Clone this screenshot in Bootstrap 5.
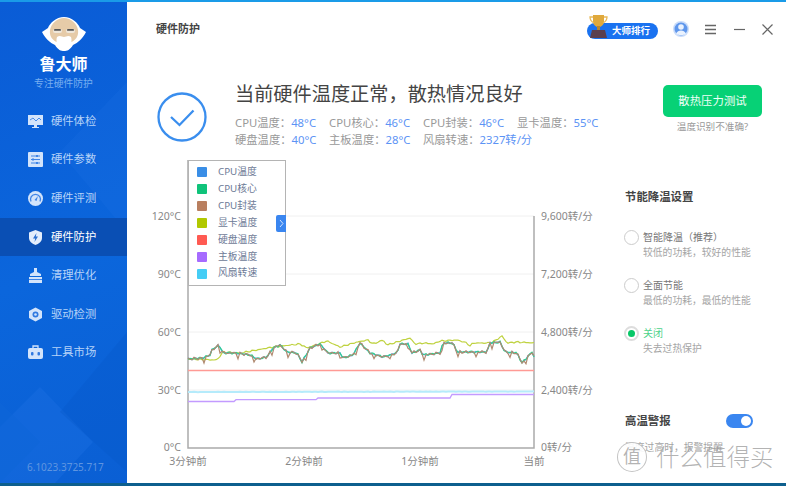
<!DOCTYPE html>
<html lang="zh-CN">
<head>
  <meta charset="UTF-8">
  <title>鲁大师 硬件防护</title>
  <link rel="stylesheet" href="https://cdn.jsdelivr.net/npm/bootstrap@5.3.0/dist/css/bootstrap.min.css">
  <style>
    html, body { height: 486px; overflow: hidden; }
    body { font-family: "Noto Sans", "Noto Sans CJK SC", sans-serif; background: #fff; color: #444; }
    .shell { width: 786px; height: 486px; border-top: 2px solid #1a9be8; border-bottom: 3px solid #0d5f8e; position: relative; overflow: hidden; }
    .side { width: 127px; flex: none; background: linear-gradient(160deg, #0a5cd6 0%, #0b66dc 55%, #0a5fd4 100%); position: relative; }
    .side-decor { position: absolute; left: 0; top: 0; }
    .side-body { position: relative; height: 100%; }
    .brand { padding-top: 15px; height: 100px; }
    .brand-name { font-size: 16px; font-weight: 700; color: #fff; line-height: 20px; margin-top: 3px; }
    .brand-sub { font-size: 9.8px; color: #78aef0; line-height: 14px; margin-top: 3px; }
    .side-item { height: 38.6px; padding-left: 28px; gap: 8px; font-size: 11.3px; color: #b6d3f8; }
    .side-item.on { background: #0a4fb4; color: #fff; }
    .side-ver { margin-top: auto; padding: 0 0 9px 27px; font-size: 10px; line-height: 14px; color: #5f95e0; }
    .topbar { height: 54px; padding: 0 13px 0 29px; }
    .page-name { font-size: 11px; font-weight: 700; color: #444; }
    .rank-pill { width: 71px; height: 16px; background: #1a72f0; border-radius: 8px; color: #fff; font-size: 9.5px; font-weight: 700; padding-left: 25px; line-height: 16px; position: relative; margin-top: 3px; }
    .rank-cup { position: absolute; left: 2px; top: -9px; }
    .icon-user { margin-left: 15px; }
    .icon-menu { margin-left: 15px; }
    .icon-min { margin-left: 17px; }
    .icon-close { margin-left: 17px; }
    .hero { height: 99px; padding-left: 30px; }
    .hero-check { margin-top: 35px; flex: none; }
    .hero-text { margin-left: 28px; padding-top: 25px; width: 394px; }
    .hero-title { font-size: 19.2px; line-height: 26px; color: #444; white-space: nowrap; }
    .stat-row { font-size: 11.3px; line-height: 17px; color: #999; }
    .stat-row > span { width: 94px; white-space: nowrap; }
    .stat-val { color: #5c93f5; font-weight: 400; }
    .stats { margin-top: 7px; }
    .btn-stress { width: 99px; height: 32px; background: #07d176; color: #f0fff7; border: 0; border-radius: 5px; font-size: 11.4px; padding: 0; }
    .btn-stress:hover { background: #07d176; color: #f0fff7; }
    .hero-side { margin-left: 34px; padding-top: 29px; width: 99px; }
    .hint { font-size: 9.6px; line-height: 14px; margin-top: 3px; color: #999; white-space: nowrap; }
    .chart-box { width: 470px; height: 315px; margin-left: 13px; flex: none; position: relative; }
    .chart-box svg text { font-size: 10.5px; fill: #888; font-family: "Noto Sans", "Noto Sans CJK SC", sans-serif; }
    .legend-box { position: absolute; left: 48px; top: 5px; width: 98px; height: 126px; background: #fff; border: 1px solid #b4b4b4; padding-top: 3px; }
    .legend-row { height: 16.9px; padding-left: 8px; font-size: 9.8px; color: #6d7a96; }
    .legend-chip { width: 10px; height: 10px; border-radius: 1px; margin-right: 11px; flex: none; }
    .legend-tab { position: absolute; right: -1px; top: 54px; width: 10px; height: 17px; background: #3a86f0; border-radius: 2px 0 0 2px; }
    .panel { padding-left: 15px; padding-top: 35px; width: 176px; }
    .panel-title { font-size: 11.4px; font-weight: 700; color: #444; line-height: 14px; }
    .mode-row { gap: 4px; height: 48px; }
    .mode-first { margin-top: 26px; }
    .mode-dot { width: 15px; height: 15px; border: 1px solid #ccc; border-radius: 50%; flex: none; margin-left: -1px; background: #fff; }
    .mode-dot.on { border: 2px solid #ddd; position: relative; }
    .mode-dot.on::after { content: ""; position: absolute; left: 2px; top: 2px; width: 7px; height: 7px; background: #07c767; border-radius: 50%; }
    .mode-name { font-size: 10px; line-height: 15px; color: #777; }
    .mode-name.on { color: #4dd38a; }
    .mode-desc { font-size: 9.8px; line-height: 15px; color: #a5a5a5; white-space: nowrap; }
    .alarm { margin-top: 39px; width: 128px; height: 16px; }
    .switch-track { width: 27px; height: 14px; border-radius: 7px; background: #3a86f0; position: relative; }
    .switch-track::after { content: ""; position: absolute; right: 2px; top: 2px; width: 10px; height: 10px; background: #fff; border-radius: 50%; }
    .alarm-desc { font-size: 9.8px; color: #a5a5a5; margin-top: 12px; line-height: 14px; white-space: nowrap; }
    .mark-wrap { position: absolute; left: 617px; top: 440px; gap: 9px; color: rgba(150,150,150,.72); }
    .mark-ring { width: 30px; height: 30px; border: 1.5px solid rgba(170,170,170,.7); border-radius: 50%; background: rgba(255,255,255,.9); font-size: 18px; line-height: 26px; text-align: center; }
    .mark-text { font-size: 23.5px; line-height: 30px; font-weight: 300; white-space: nowrap; }
  </style>
</head>
<body>
  <div class="shell d-flex">
    <!-- SIDEBAR -->
    <aside class="side">
      <svg class="side-decor" width="127" height="481" viewBox="0 0 127 481">
        <path d="M127 80 L60 150 L127 230Z" fill="#1a70e2" opacity=".25"/>
        <path d="M40 385 L93 440 L55 481 L0 481 L0 425Z" fill="#1f74e4" opacity=".35"/>
        <path d="M0 400 L40 440 L0 481Z" fill="#0d66d8" opacity=".5"/>
        <path d="M127 330 L60 410 L127 470Z" fill="#0856c8" opacity=".3"/>
      </svg>
      <div class="side-body d-flex flex-column">
        <div class="brand text-center">
          <svg width="44" height="34" viewBox="0 0 44 34">
            <path d="M22 0C30 0 36 6 38 11L44 15C41 21 36 26 31 28 28 33 25 34 22 34 19 34 16 33 13 28 8 26 3 21 0 15L6 11C8 6 14 0 22 0Z" fill="#fff"/>
            <path d="M22 1C29 1 35 7 36 13 37 19 33 24 29 25H15C11 24 7 19 8 13 9 7 15 1 22 1Z" fill="#e6cba8"/>
            <path d="M15 20C18 18 20 20 22 20S26 18 29 20C31 25 27 33 22 33S13 25 15 20Z" fill="#fff"/>
            <rect x="11" y="12" width="9" height="4" rx="2" fill="#efe7da"/>
            <rect x="24" y="12" width="9" height="4" rx="2" fill="#efe7da"/>
            <rect x="12" y="12" width="7" height="1.800" rx=".9" fill="#555"/>
            <rect x="25" y="12" width="7" height="1.800" rx=".9" fill="#555"/>
          </svg>
          <div class="brand-name">鲁大师</div>
          <div class="brand-sub">专注硬件防护</div>
        </div>
        <div class="d-flex flex-column">
          <div class="side-item d-flex align-items-center">
            <svg width="15" height="15" viewBox="0 0 15 15"><path d="M0 1H15V11H9V13H11V14H4V13H6V11H0Z" fill="#d3e4fb"/><path d="M2 6L5 4 8 7 11 4 13 6" fill="none" stroke="#4a8ce8" stroke-width="1"/></svg>
            <span>硬件体检</span>
          </div>
          <div class="side-item d-flex align-items-center">
            <svg width="15" height="15" viewBox="0 0 15 15"><rect width="15" height="15" rx="1" fill="#d3e4fb"/><path d="M3 4H12M3 7.500H12M3 11H12" stroke="#3f84e6" stroke-width="1.200"/><rect x="8" y="3" width="2" height="2" fill="#3f84e6"/><rect x="4" y="6.500" width="2" height="2" fill="#3f84e6"/><rect x="8" y="10" width="2" height="2" fill="#3f84e6"/></svg>
            <span>硬件参数</span>
          </div>
          <div class="side-item d-flex align-items-center">
            <svg width="15" height="15" viewBox="0 0 15 15"><circle cx="7.500" cy="7.500" r="7.500" fill="#d3e4fb"/><path d="M3 10.500A5 5 0 1 1 12 10.500" fill="none" stroke="#3f84e6" stroke-width="1.300"/><path d="M6.500 9L10 5 8.500 10Z" fill="#3f84e6"/></svg>
            <span>硬件评测</span>
          </div>
          <div class="side-item on d-flex align-items-center">
            <svg width="15" height="15" viewBox="0 0 15 15"><path d="M7.500 0L14 2.500V8C14 11.500 10.500 14 7.500 15 4.500 14 1 11.500 1 8V2.500Z" fill="#e4eefc"/><path d="M8.500 3L5 8.500H7.200L6.500 12 10 6.500H7.800Z" fill="#2a6fd0"/></svg>
            <span>硬件防护</span>
          </div>
          <div class="side-item d-flex align-items-center">
            <svg width="15" height="15" viewBox="0 0 15 15"><path d="M6 0H9V4L13 6V8H2V6L6 4Z" fill="#d3e4fb"/><path d="M1 9H14V15H1Z" fill="#d3e4fb"/><path d="M1 11.500H14" stroke="#3f84e6"/></svg>
            <span>清理优化</span>
          </div>
          <div class="side-item d-flex align-items-center">
            <svg width="15" height="15" viewBox="0 0 15 15"><path d="M7.500 .500L14 4V11L7.500 14.500 1 11V4Z" fill="#d3e4fb"/><circle cx="7.500" cy="7.500" r="3" fill="#2f78e0"/><circle cx="7.500" cy="7.500" r="1.300" fill="#d3e4fb"/></svg>
            <span>驱动检测</span>
          </div>
          <div class="side-item d-flex align-items-center">
            <svg width="15" height="15" viewBox="0 0 15 15"><path d="M5 3V1H10V3" fill="none" stroke="#d3e4fb" stroke-width="1.300"/><rect y="3" width="15" height="11" rx="2" fill="#d3e4fb"/><rect x="3" y="7" width="2.500" height="3.500" rx="1" fill="#2f78e0"/><rect x="9.500" y="7" width="2.500" height="3.500" rx="1" fill="#2f78e0"/></svg>
            <span>工具市场</span>
          </div>
        </div>
        <div class="side-ver">6.1023.3725.717</div>
      </div>
    </aside>

    <!-- MAIN -->
    <main class="flex-grow-1 d-flex flex-column">
      <div class="topbar d-flex align-items-center">
        <div class="page-name me-auto">硬件防护</div>
        <div class="rank-pill">
          <svg class="rank-cup" width="19" height="25" viewBox="0 0 19 25">
            <path d="M4 1H15V7C15 11 12 13 9.500 13S4 11 4 7Z" fill="#e0a93c"/>
            <path d="M4 3H1C1 7 3 8 5 9M15 3H18C18 7 16 8 14 9" fill="none" stroke="#e8b95a" stroke-width="1.300"/>
            <rect x="8" y="12" width="3" height="4" fill="#b8862e"/>
            <path d="M3 16H16L18 24H1Z" fill="#5b3f4e"/>
          </svg>
          大师排行
        </div>
        <svg class="icon-user" width="16" height="16" viewBox="0 0 16 16"><circle cx="8" cy="8" r="8" fill="#c9dcfa"/><circle cx="8" cy="8" r="6.500" fill="#5f97ec"/><circle cx="8" cy="6" r="2.800" fill="#eaf2fe"/><path d="M3 13C4 10 6 9.500 8 9.500S12 10 13 13C11.500 14.500 4.500 14.500 3 13Z" fill="#eaf2fe"/></svg>
        <svg class="icon-menu" width="13" height="11" viewBox="0 0 13 11"><path d="M1 1.500H12M1 5.500H12M1 9.500H12" stroke="#666" stroke-width="1.300"/></svg>
        <svg class="icon-min" width="11" height="11" viewBox="0 0 11 11"><path d="M0 5.500H11" stroke="#666" stroke-width="1.200"/></svg>
        <svg class="icon-close" width="11" height="11" viewBox="0 0 11 11"><path d="M.5 .5L10.500 10.500M10.500 .5L.5 10.500" stroke="#666" stroke-width="1.200"/></svg>
      </div>

      <div class="hero d-flex">
        <svg class="hero-check" width="50" height="52" viewBox="0 0 50 52"><circle cx="25" cy="26" r="23.500" fill="none" stroke="#3a8eee" stroke-width="2.300"/><path d="M14 26L22.500 34 36.500 19.500" fill="none" stroke="#3a8eee" stroke-width="2.300"/></svg>
        <div class="hero-text">
          <div class="hero-title">当前硬件温度正常，散热情况良好</div>
          <div class="stats">
            <div class="stat-row d-flex">
              <span>CPU温度：<b class="stat-val">48°C</b></span>
              <span>CPU核心：<b class="stat-val">46°C</b></span>
              <span>CPU封装：<b class="stat-val">46°C</b></span>
              <span>显卡温度：<b class="stat-val">55°C</b></span>
            </div>
            <div class="stat-row d-flex">
              <span>硬盘温度：<b class="stat-val">40°C</b></span>
              <span>主板温度：<b class="stat-val">28°C</b></span>
              <span>风扇转速：<b class="stat-val">2327转/分</b></span>
            </div>
          </div>
        </div>
        <div class="hero-side text-center">
          <button class="btn btn-stress">散热压力测试</button>
          <div class="hint">温度识别不准确?</div>
        </div>
      </div>

      <div class="d-flex">
        <div class="chart-box">
          <svg id="chart" width="470" height="315" viewBox="140 155 470 315">
            <g stroke="#f0f0f0">
              <line x1="188" x2="534" y1="216" y2="216"/>
              <line x1="188" x2="534" y1="274" y2="274"/>
              <line x1="188" x2="534" y1="332" y2="332"/>
              <line x1="188" x2="534" y1="390" y2="390"/>
            </g>
            <path d="M188 160V448H534V216" fill="none" stroke="#aaa" stroke-width="1.500"/>
            <g id="lines" fill="none"></g>
            <g text-anchor="end">
              <text x="181" y="220">120°C</text>
              <text x="181" y="278">90°C</text>
              <text x="181" y="336">60°C</text>
              <text x="181" y="394">30°C</text>
              <text x="181" y="451">0°C</text>
            </g>
            <text x="541" y="220">9,600转/分</text>
            <text x="541" y="278">7,200转/分</text>
            <text x="541" y="336">4,800转/分</text>
            <text x="541" y="394">2,400转/分</text>
            <text x="541" y="451">0转/分</text>
            <g text-anchor="middle">
              <text x="188" y="465">3分钟前</text>
              <text x="304" y="465">2分钟前</text>
              <text x="420" y="465">1分钟前</text>
              <text x="534" y="465">当前</text>
            </g>
          </svg>
          <div class="legend-box" id="legend">
            <div class="legend-tab d-flex align-items-center justify-content-center">
              <svg width="5" height="9" viewBox="0 0 5 9"><path d="M1 1L4 4.500 1 8" fill="none" stroke="#cfe2ff"/></svg>
            </div>
          </div>
        </div>

        <div class="panel">
          <div class="panel-title">节能降温设置</div>
          <div class="mode-row mode-first d-flex">
            <div class="mode-dot"></div>
            <div><div class="mode-name">智能降温（推荐）</div><div class="mode-desc">较低的功耗，较好的性能</div></div>
          </div>
          <div class="mode-row d-flex">
            <div class="mode-dot"></div>
            <div><div class="mode-name">全面节能</div><div class="mode-desc">最低的功耗，最低的性能</div></div>
          </div>
          <div class="mode-row d-flex">
            <div class="mode-dot on"></div>
            <div><div class="mode-name on">关闭</div><div class="mode-desc">失去过热保护</div></div>
          </div>
          <div class="alarm d-flex align-items-center justify-content-between">
            <div class="panel-title">高温警报</div>
            <div class="switch-track"></div>
          </div>
          <div class="alarm-desc">温度过高时，报警提醒</div>
        </div>
      </div>
    </main>

    <div class="mark-wrap d-flex align-items-center">
      <div class="mark-ring">值</div>
      <div class="mark-text">什么值得买</div>
    </div>
  </div>

  <script src="https://cdn.jsdelivr.net/npm/bootstrap@5.3.0/dist/js/bootstrap.bundle.min.js"></script>
  <script>
    const legend = [
      ['CPU温度', '#3a8ee6'], ['CPU核心', '#0fc37a'], ['CPU封装', '#b97f5f'], ['显卡温度', '#b1c800'],
      ['硬盘温度', '#ff5a52'], ['主板温度', '#a66bff'], ['风扇转速', '#45cdf5']
    ];
    const legendBox = document.getElementById('legend');
    const legendTab = legendBox.querySelector('.legend-tab');
    legend.forEach(([name, color]) => {
      const row = document.createElement('div');
      row.className = 'legend-row d-flex align-items-center';
      row.innerHTML = `<span class="legend-chip" style="background:${color}"></span>${name}`;
      legendBox.insertBefore(row, legendTab);
    });

    // temperature curve traced from the picture, as x,y pairs in page pixels
    const base = [[188,359],[203,358],[210,355],[212,350],[219,345],[223,353],[237,353],[250,355],[257,359],[267,357],[273,348],[280,345],[287,352],[297,353],[302,362],[310,348],[320,344],[328,353],[340,353],[343,358],[353,355],[360,343],[370,353],[383,357],[397,353],[400,344],[408,344],[412,353],[420,350],[423,355],[440,353],[443,343],[453,343],[457,352],[487,352],[490,343],[500,342],[505,352],[517,353],[522,363],[532,352],[534,357]];
    const gpu = [[188,359],[217,360],[223,352],[240,353],[257,350],[273,347],[300,344],[307,348],[327,341],[340,347],[357,342],[368,340],[373,344],[383,340],[387,345],[410,338],[415,344],[425,343],[433,344],[440,341],[457,340],[467,343],[470,346],[473,343],[488,343],[493,342],[502,336],[507,343],[517,342],[534,343]];

    function yAt(pts, x) {
      for (let i = 1; i < pts.length; i++) {
        if (x <= pts[i][0]) {
          const t = (x - pts[i-1][0]) / (pts[i][0] - pts[i-1][0]);
          return pts[i-1][1] + t * (pts[i][1] - pts[i-1][1]);
        }
      }
      return pts[pts.length-1][1];
    }
    function wobble(pts, amp, seed, dip) {
      const out = [];
      for (let x = 188; x <= 534; x += 2) {
        let y = yAt(pts, x) + amp * Math.sin(x * 1.7 + seed) * Math.cos(x * 0.61 + seed);
        if (dip && Math.sin(x * 0.37 + seed) > 0.93) y += dip;
        out.push(x + ',' + y.toFixed(1));
      }
      return out.join(' ');
    }
    const lines = [
      [[[188,401.5],[235,401.5],[236,399.7],[316,399.7],[317,398],[450,398],[451,394.500],[534,394.500]], '#c39bff', 0, 0, 1.300],
      [[[188,392],[534,391.500]], '#b5ebfb', .2, 0, 2],
      [[[188,370.500],[534,370.500]], '#ff9a95', 0, 0, 1.300],
      [gpu, '#bfd240', .8, 0, 1.200],
      [base, '#5ba6ee', 1, 0, 1.200],
      [base, '#2fcf90', 1.200, 0, 1.200],
      [base, '#b08a70', 1.500, 5, 1.200]
    ];
    const g = document.getElementById('lines');
    lines.forEach(([pts, color, amp, dip, w], i) => {
      const el = document.createElementNS('http://www.w3.org/2000/svg', 'polyline');
      el.setAttribute('points', wobble(pts, amp, i * 1.3, dip));
      el.setAttribute('stroke', color);
      el.setAttribute('stroke-width', w);
      g.appendChild(el);
    });
  </script>
</body>
</html>
